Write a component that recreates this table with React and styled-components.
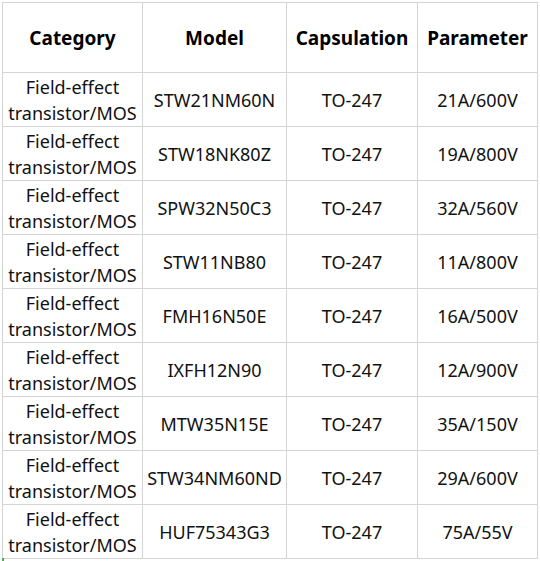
import styled, { createGlobalStyle } from "styled-components";

const GlobalStyle = createGlobalStyle`
  html, body {
    margin: 0;
    padding: 0;
    background: #ffffff;
  }
  body {
    font-family: "Noto Sans", "Open Sans", sans-serif;
    color: #111111;
  }
`;

const rows = [
  ["STW21NM60N", "21A/600V"],
  ["STW18NK80Z", "19A/800V"],
  ["SPW32N50C3", "32A/560V"],
  ["STW11NB80", "11A/800V"],
  ["FMH16N50E", "16A/500V"],
  ["IXFH12N90", "12A/900V"],
  ["MTW35N15E", "35A/150V"],
  ["STW34NM60ND", "29A/600V"],
  ["HUF75343G3", "75A/55V"],
];

export default function App() {
  return (
    <>
      <GlobalStyle />
      <Page>
        <Table>
          <HeadCell>Category</HeadCell>
          <HeadCell>Model</HeadCell>
          <HeadCell>Capsulation</HeadCell>
          <HeadCell>Parameter</HeadCell>
          {rows.map(([model, param]) => (
            <Row key={model}>
              <Cell>
                Field-effect
                <br />
                transistor/MOS
              </Cell>
              <Cell>{model}</Cell>
              <Cell>TO-247</Cell>
              <Cell>{param}</Cell>
            </Row>
          ))}
        </Table>
        <Marker />
      </Page>
    </>
  );
}

const Page = styled.div`
  position: relative;
  padding: 2px 0 0 2px;
  width: 540px;
  height: 561px;
  box-sizing: border-box;
  overflow: hidden;
`;

const Table = styled.div`
  display: grid;
  grid-template-columns: 140px 144px 131px 120px;
  grid-template-rows: 70px;
  grid-auto-rows: 54px;
  border-left: 1px solid #d4d4d4;
  border-top: 1px solid #d4d4d4;
  width: max-content;
`;

const Row = styled.div`
  display: contents;
`;

const Cell = styled.div`
  display: flex;
  align-items: center;
  justify-content: center;
  text-align: center;
  border-right: 1px solid #d4d4d4;
  border-bottom: 1px solid #d4d4d4;
  font-size: 18px;
  line-height: 26px;
  white-space: nowrap;
`;

const HeadCell = styled(Cell)`
  font-size: 19px;
  font-weight: 700;
  color: #000000;
`;

const Marker = styled.div`
  position: absolute;
  left: 2px;
  top: 558px;
  width: 2px;
  height: 3px;
  background: #4caf50;
`;
